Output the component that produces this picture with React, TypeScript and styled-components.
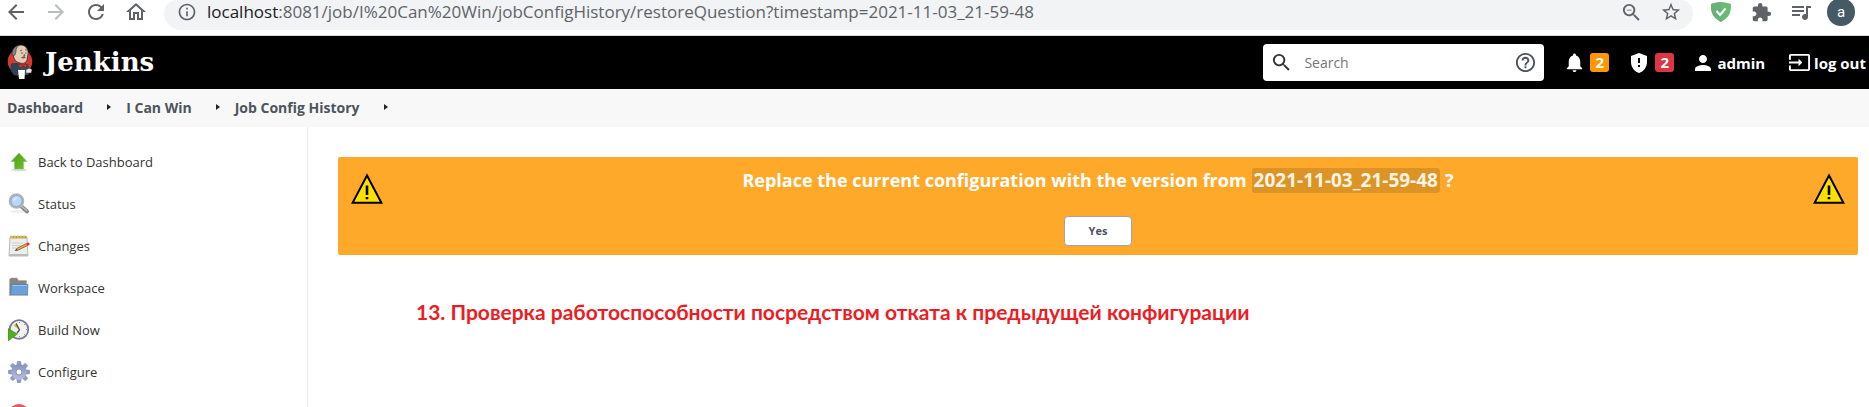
import React from "react";
import styled, { createGlobalStyle } from "styled-components";
import {
  MdArrowBack,
  MdArrowForward,
  MdExtension,
  MdGppMaybe,
  MdHelpOutline,
  MdInfoOutline,
  MdInput,
  MdNotifications,
  MdOutlineHome,
  MdPerson,
  MdQueueMusic,
  MdRefresh,
  MdSearch,
  MdStarBorder,
  MdZoomOut,
} from "react-icons/md";

const GlobalStyle = createGlobalStyle`
  *, *::before, *::after { box-sizing: border-box; }
  body {
    margin: 0;
    background: #fff;
    color: #333;
    font-family: "Open Sans", "Noto Sans", sans-serif;
    font-size: 13px;
  }
  button, input { font: inherit; }
  a { color: inherit; text-decoration: none; }
  svg { display: block; flex: none; }
`;

const Page = styled.div`
  display: flex;
  flex-direction: column;
  height: 100vh;
  overflow: hidden;
`;

/* ---------- Browser toolbar ---------- */

const BrowserBar = styled.div`
  display: flex;
  flex: none;
  align-items: flex-start;
  height: 36px;
  padding: 0 8px 0 4px;
  border-bottom: 1px solid #dadce0;
  color: #5f6368;
`;

const NavButtons = styled.div`
  display: flex;
  gap: 16px;
  margin-right: 16px;
`;

const NavButton = styled.button<{ $muted?: boolean }>`
  display: flex;
  padding: 0;
  border: 0;
  background: none;
  color: ${(p) => (p.$muted ? "#babcbe" : "#5f6368")};
`;

const AddressBar = styled.div`
  display: flex;
  flex: 1;
  align-items: flex-start;
  height: 30px;
  margin-right: 8px;
  padding: 0 2px 0 13px;
  border-radius: 13px 13px 17px 17px;
  background: #f1f3f4;
`;

const SiteInfo = styled.span`
  display: flex;
  align-items: center;
  height: 24px;
  margin-right: 10px;
`;

const AddressText = styled.div`
  flex: 1;
  font-size: 17px;
  line-height: 24px;
  white-space: nowrap;
`;

const Host = styled.span`
  color: #202124;
`;

const BarAction = styled.button`
  display: flex;
  flex: none;
  align-items: center;
  justify-content: center;
  width: 40px;
  height: 24px;
  padding: 0;
  border: 0;
  background: none;
  color: #5f6368;
`;

const Avatar = styled.span`
  display: flex;
  flex: none;
  align-items: center;
  justify-content: center;
  width: 28px;
  height: 28px;
  border-radius: 50%;
  background: #455a64;
  color: #fff;
  font-family: Roboto, sans-serif;
  font-size: 15px;
`;

/* ---------- Jenkins header ---------- */

const Header = styled.header`
  display: flex;
  flex: none;
  align-items: center;
  height: 53px;
  padding: 0 3px 0 7px;
  background: #000;
  color: #fff;
  font-size: 15px;
  font-weight: 700;
`;

const Brand = styled.a`
  display: flex;
  align-items: center;
  gap: 12px;
  margin-right: auto;
  padding-bottom: 2px;
  font-family: "DejaVu Serif", serif;
  font-size: 26px;
  line-height: 32px;
`;

const SearchBox = styled.label`
  display: flex;
  align-items: center;
  width: 281px;
  height: 37px;
  margin-right: 19px;
  padding: 0 7px;
  border-radius: 4px;
  background: #fff;
  color: #333;
`;

const SearchInput = styled.input`
  flex: 1;
  min-width: 0;
  margin-left: 11px;
  padding: 0;
  border: 0;
  outline: 0;
  background: none;
  font-size: 14px;
  font-weight: 400;
  color: #333;
  &::placeholder {
    color: #757575;
    opacity: 1;
  }
`;

const HelpLink = styled.a`
  color: #4d545d;
`;

const HeaderLink = styled.a<{ $gap: number; $after?: number }>`
  display: flex;
  align-items: center;
  gap: ${(p) => p.$gap}px;
  margin-right: ${(p) => p.$after ?? 0}px;
  line-height: 20px;
  white-space: nowrap;
`;

const Badge = styled.span<{ $color: string }>`
  width: 19px;
  height: 19px;
  border-radius: 3px;
  background: ${(p) => p.$color};
  line-height: 19px;
  text-align: center;
`;

/* ---------- Breadcrumbs ---------- */

const Breadcrumbs = styled.nav`
  display: flex;
  flex: none;
  align-items: center;
  height: 38px;
  padding: 0 7px 2px;
  background: #f8f8f8;
  color: #4d545d;
  font-size: 14px;
  font-weight: 700;
`;

const Separator = styled.span`
  width: 0;
  height: 0;
  margin: 0 15px 0 24px;
  border: 3px solid transparent;
  border-left: 4px solid #222;
  border-right: 0;
`;

/* ---------- Body ---------- */

const Body = styled.div`
  display: flex;
  flex: 1;
  min-height: 0;
`;

const Sidebar = styled.nav`
  flex: none;
  width: 308px;
  padding: 14px 0 0 8px;
  border-right: 1px solid #eaeaea;
`;

const Task = styled.a`
  display: flex;
  align-items: center;
  gap: 8px;
  height: 42px;
`;

const Main = styled.main`
  flex: 1;
  min-width: 0;
  padding: 30px 11px 0 30px;
`;

const Banner = styled.form`
  display: flex;
  align-items: flex-start;
  justify-content: space-between;
  padding: 11px 13px 9px;
  border-radius: 2px;
  background: #ffa92b;
`;

const WarningSlot = styled.span`
  padding-top: 5px;
`;

const Question = styled.div`
  display: flex;
  flex-direction: column;
  align-items: center;
  gap: 23px;
  color: #fff;
  font-size: 18px;
  font-weight: 700;
  line-height: 25px;
  white-space: nowrap;
`;

const QuestionText = styled.div`
  display: flex;
  align-items: baseline;
  gap: 5px;
  height: 25px;
`;

const Timestamp = styled.span`
  padding: 0 2px;
  border-radius: 3px;
  background: #dd9426;
  color: #fff4e4;
  font-size: 19px;
`;

const YesButton = styled.button`
  width: 68px;
  height: 30px;
  padding: 0;
  border: 1px solid #a0a4a8;
  border-radius: 4px;
  background: #fff;
  color: #4d545d;
  font-size: 11px;
  line-height: 16px;
`;

const Note = styled.p`
  margin: 43px 0 0 78px;
  color: #ed1c24;
  font-family: Lato, sans-serif;
  font-size: 21px;
  font-weight: 700;
  line-height: 28px;
`;

/* ---------- Drawings ---------- */

const JenkinsLogo = () => (
  <svg width="26" height="36" viewBox="0 0 26 36">
    <ellipse cx="13" cy="17.500" rx="12.300" ry="12.500" fill="#d33833" />
    <path d="M4 20l7-1 4 2 6-1 2 6-2 5H8l-4-4z" fill="#335061" />
    <path d="M5 19c-3 3-1 9 2 12l4 1V19z" fill="#2b4453" />
    <path d="M6 10c0-5 4-9 8-9s8 4 7 9l-1 6c-1 3-4 4-7 3-4-1-6-3-7-9z" fill="#e6cdb2" stroke="#222" strokeWidth=".7" />
    <path d="M5 10c0-5 3-8 7-9-3 3-3 5-3 7l-1 3-2 1z" fill="#81838a" stroke="#222" strokeWidth=".5" />
    <path d="M13 7l2-1m3 0l2 0M14 9h2m2 0h1.500M17 10l1 2h-2" stroke="#333" strokeWidth=".7" fill="none" />
    <path d="M14 13.500c2-1.500 4-1.500 5 0-2 1-4 1.500-5 0z" fill="#6b5d50" />
    <path d="M12 19.500l4 2 3-2 1 4-4-1-4 1.500z" fill="#d33833" stroke="#68100f" strokeWidth=".5" />
    <path d="M11 26h7l-.5 9h-5.500z" fill="#fff" />
    <path d="M19 26c2-2 5-2 6 0l-1 3-5 0z" fill="#ede6dc" stroke="#444" strokeWidth=".5" />
  </svg>
);

const AdguardIcon = () => (
  <svg width="20" height="22" viewBox="0 0 20 22">
    <path d="M10 1C7 1 3 2 0 3c0 8 1 13 10 18 9-5 10-10 10-18-3-1-7-2-10-2z" fill="#68bc71" />
    <path d="M10 1C7 1 3 2 0 3c0 8 1 13 10 18z" fill="#67b279" />
    <path d="M5.500 10l3.500 4 5.500-6.500" fill="none" stroke="#fff" strokeWidth="2" />
  </svg>
);

const WarningIcon = () => (
  <svg width="32" height="32" viewBox="0 0 32 32">
    <path d="M16 2.500L1.600 29.800h28.800z" fill="#fce100" stroke="#000" strokeWidth="2" />
    <path d="M14.700 12.500h2.600V22h-2.600zM14.700 24h2.600v2.200h-2.600z" fill="#000" />
  </svg>
);

const UpIcon = () => (
  <svg width="22" height="22" viewBox="0 0 22 22">
    <defs>
      <linearGradient id="up" x1="0" y1="0" x2="1" y2="1">
        <stop offset="0" stopColor="#4a9a1c" />
        <stop offset="1" stopColor="#6fc42c" />
      </linearGradient>
    </defs>
    <ellipse cx="11" cy="19" rx="8" ry="1.500" fill="#ddd" />
    <path d="M11 2l8 8.500h-3.500V18h-9v-7.500H3z" fill="url(#up)" stroke="#8cc56c" strokeWidth=".6" />
  </svg>
);

const StatusIcon = () => (
  <svg width="22" height="22" viewBox="0 0 22 22">
    <ellipse cx="10" cy="18.500" rx="8" ry="1.500" fill="#eee" />
    <path d="M13 13l6 5.500" stroke="#888" strokeWidth="4" strokeLinecap="round" />
    <path d="M13.500 13l5 4.500" stroke="#bbb" strokeWidth="1.600" strokeLinecap="round" />
    <circle cx="8.500" cy="8" r="6.800" fill="#bcd6f5" stroke="#b5b5b5" strokeWidth="2" />
    <circle cx="8.500" cy="8" r="5.600" fill="none" stroke="#7fa5d8" strokeWidth="1" />
    <path d="M5 8c0-2 2-4 5-3.500C8 6 7 7 5 8z" fill="#e9f3ff" />
  </svg>
);

const ChangesIcon = () => (
  <svg width="22" height="22" viewBox="0 0 22 22">
    <path d="M2 2h17l1 19H1z" fill="#ededeb" stroke="#aaa" strokeWidth=".8" />
    <path d="M1.500 19h18.500V21H1z" fill="#bbb" />
    <path d="M2.500 1h16v2.500h-16z" fill="#b6a038" />
    <path d="M4 0v4M7 0v4M10 0v4M13 0v4M16 0v4" stroke="#e5d48a" strokeWidth="1" />
    <path d="M4 8h11M4 10.500h9M4 13h4" stroke="#ccc" strokeWidth=".9" />
    <path d="M9 14.500l10-5" stroke="#7a5418" strokeWidth="3" />
    <path d="M9 14.500l10-5" stroke="#e5a64b" strokeWidth="1.800" />
    <path d="M6.500 16l2-2.600 1.400 2.200z" fill="#444" />
    <circle cx="20" cy="9" r="1.600" fill="#ef2929" />
  </svg>
);

const FolderIcon = () => (
  <svg width="22" height="22" viewBox="0 0 22 22">
    <path d="M1.500 18V2.500L3 1h6l1.500 2.500h8V18z" fill="#858585" stroke="#aaa" strokeWidth=".6" />
    <path d="M3.500 7.500h16.500L19.500 18H2.500z" fill="#6d9fd8" stroke="#4b7cb8" strokeWidth=".7" />
    <path d="M4.500 8.500h14.500" stroke="#a0c3ec" strokeWidth="1" />
    <path d="M1 18.500h19" stroke="#bbb" strokeWidth="1" />
  </svg>
);

const BuildIcon = () => (
  <svg width="22" height="22" viewBox="0 0 22 22">
    <circle cx="11" cy="10.500" r="9.300" fill="#f1f1ee" stroke="#77779a" strokeWidth="1.800" />
    <path d="M11 10.500L5.500 6.500 9 4z" fill="#d9b93c" />
    <path d="M8 4.500l3.500 6.500-2.500 3" fill="none" stroke="#4a4a42" strokeWidth="1.200" />
    <path d="M18 10.500h1M11.500 17v1M11.500 3v1M16 6l.8-.8M16 15l.8.8" stroke="#888" strokeWidth="1" />
    <path d="M0 9.500l9.500 5.500L0 22z" fill="#4faf1c" stroke="#37820f" strokeWidth=".5" />
  </svg>
);

const GearIcon = () => (
  <svg width="22" height="22" viewBox="0 0 22 22">
    <defs>
      <linearGradient id="gear" gradientUnits="userSpaceOnUse" x1="11" y1="0" x2="11" y2="22">
        <stop offset="0" stopColor="#6f86b4" />
        <stop offset=".5" stopColor="#9faad0" />
        <stop offset="1" stopColor="#c5c5e2" />
      </linearGradient>
    </defs>
    <g fill="#8f9cc2" stroke="#7d88ac" strokeWidth=".5">
      {[0, 45, 90, 135, 180, 225, 270, 315].map((angle) => (
        <path key={angle} d="M8.800 5L9.300.3h3.400L13.200 5z" transform={`rotate(${angle} 11 11)`} />
      ))}
    </g>
    <circle cx="11" cy="11" r="7.800" fill="url(#gear)" />
    <circle cx="11" cy="11" r="3" fill="#fff" stroke="#8a93ba" strokeWidth="1" />
  </svg>
);

const DeleteIcon = () => (
  <svg width="22" height="22" viewBox="0 0 22 22">
    <circle cx="11" cy="11" r="8.500" fill="#fff" stroke="#e05a5a" strokeWidth="3.200" />
    <path d="M5 5l12 12" stroke="#e05a5a" strokeWidth="3" />
  </svg>
);

const tasks = [
  { label: "Back to Dashboard", Icon: UpIcon },
  { label: "Status", Icon: StatusIcon },
  { label: "Changes", Icon: ChangesIcon },
  { label: "Workspace", Icon: FolderIcon },
  { label: "Build Now", Icon: BuildIcon },
  { label: "Configure", Icon: GearIcon },
  { label: "", Icon: DeleteIcon },
];

const crumbs = ["Dashboard", "I Can Win", "Job Config History"];

export default function App() {
  return (
    <>
      <GlobalStyle />
      <Page>
        <BrowserBar>
          <NavButtons>
            <NavButton type="button"><MdArrowBack size={24} /></NavButton>
            <NavButton type="button" $muted><MdArrowForward size={24} /></NavButton>
            <NavButton type="button"><MdRefresh size={24} /></NavButton>
            <NavButton type="button"><MdOutlineHome size={24} /></NavButton>
          </NavButtons>
          <AddressBar>
            <SiteInfo><MdInfoOutline size={20} /></SiteInfo>
            <AddressText>
              <Host>localhost</Host>
              :8081/job/I%20Can%20Win/jobConfigHistory/restoreQuestion?timestamp=2021-11-03_21-59-48
            </AddressText>
            <BarAction type="button"><MdZoomOut size={23} /></BarAction>
            <BarAction type="button"><MdStarBorder size={22} /></BarAction>
          </AddressBar>
          <BarAction type="button"><AdguardIcon /></BarAction>
          <BarAction type="button"><MdExtension size={21} /></BarAction>
          <BarAction type="button"><MdQueueMusic size={24} /></BarAction>
          <BarAction type="button"><Avatar>a</Avatar></BarAction>
        </BrowserBar>

        <Header>
          <Brand href="#">
            <JenkinsLogo />
            Jenkins
          </Brand>
          <SearchBox>
            <MdSearch size={23} />
            <SearchInput type="search" placeholder="Search" />
            <HelpLink href="#"><MdHelpOutline size={23} /></HelpLink>
          </SearchBox>
          <HeaderLink href="#" $gap={4} $after={18}>
            <MdNotifications size={23} />
            <Badge $color="#ff9800">2</Badge>
          </HeaderLink>
          <HeaderLink href="#" $gap={4} $after={17}>
            <MdGppMaybe size={24} />
            <Badge $color="#dc3545">2</Badge>
          </HeaderLink>
          <HeaderLink href="#" $gap={2} $after={23}>
            <MdPerson size={24} />
            admin
          </HeaderLink>
          <HeaderLink href="#" $gap={3}>
            <MdInput size={23} />
            log out
          </HeaderLink>
        </Header>

        <Breadcrumbs>
          {crumbs.map((crumb) => (
            <React.Fragment key={crumb}>
              <a href="#">{crumb}</a>
              <Separator />
            </React.Fragment>
          ))}
        </Breadcrumbs>

        <Body>
          <Sidebar>
            {tasks.map(({ label, Icon }, index) => (
              <Task href="#" key={index}>
                <Icon />
                {label}
              </Task>
            ))}
          </Sidebar>
          <Main>
            <Banner>
              <WarningSlot><WarningIcon /></WarningSlot>
              <Question>
                <QuestionText>
                  <span>Replace the current configuration with the version from</span>
                  <Timestamp>2021-11-03_21-59-48</Timestamp>
                  <span>?</span>
                </QuestionText>
                <YesButton type="button">Yes</YesButton>
              </Question>
              <WarningSlot><WarningIcon /></WarningSlot>
            </Banner>
            <Note>13. Проверка работоспособности посредством отката к предыдущей конфигурации</Note>
          </Main>
        </Body>
      </Page>
    </>
  );
}
